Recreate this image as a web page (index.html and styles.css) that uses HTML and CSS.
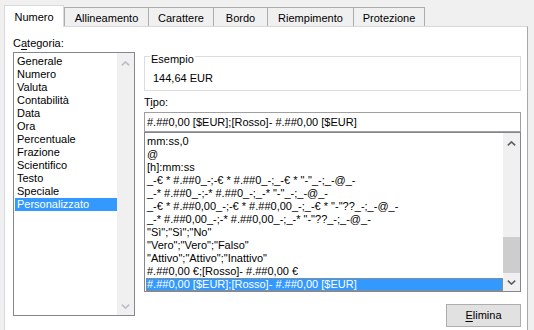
FILE: index.html
```html
<!DOCTYPE html>
<html lang="it">
<head>
	<meta charset="utf-8" />
	<title>Formato celle</title>
	<link rel="stylesheet" href="styles.css">
</head>
<body>
	<div class="dialog">
		<div class="tabs">
			<div class="tab active">Numero</div>
			<div class="tab t-all">Allineamento</div>
			<div class="tab t-car">Carattere</div>
			<div class="tab t-bor">Bordo</div>
			<div class="tab t-rie">Riempimento</div>
			<div class="tab t-pro">Protezione</div>
		</div>
		<div class="panel">
			<div class="col-left">
				<div class="label">C<u>a</u>tegoria:</div>
				<div class="listbox cat">
					<ul class="items">
						<li>Generale</li>
						<li>Numero</li>
						<li>Valuta</li>
						<li>Contabilità</li>
						<li>Data</li>
						<li>Ora</li>
						<li>Percentuale</li>
						<li>Frazione</li>
						<li>Scientifico</li>
						<li>Testo</li>
						<li>Speciale</li>
						<li class="sel">Personalizzato</li>
					</ul>
					<div class="scrollbar off">
						<div class="sb-btn up"><svg width="9" height="5" viewBox="0 0 9 5"><polyline points="0.8,4.4 4.5,0.9 8.2,4.4" /></svg></div>
						<div class="sb-track"></div>
						<div class="sb-btn down"><svg width="9" height="5" viewBox="0 0 9 5"><polyline points="0.8,0.6 4.5,4.1 8.2,0.6" /></svg></div>
					</div>
				</div>
			</div>
			<div class="col-right">
				<div class="sample">
					<span class="legend">Esempio</span>
					<div class="sample-value">144,64 EUR</div>
				</div>
				<div class="label tipo">T<u>i</u>po:</div>
				<div class="input">#.##0,00 [$EUR];[Rosso]- #.##0,00 [$EUR]</div>
				<div class="listbox fmt">
					<ul class="items">
						<li>mm:ss,0</li>
						<li>@</li>
						<li>[h]:mm:ss</li>
						<li>_-€ * #.##0_-;-€ * #.##0_-;_-€ * "-"_-;_-@_-</li>
						<li>_-* #.##0_-;-* #.##0_-;_-* "-"_-;_-@_-</li>
						<li>_-€ * #.##0,00_-;-€ * #.##0,00_-;_-€ * "-"??_-;_-@_-</li>
						<li>_-* #.##0,00_-;-* #.##0,00_-;_-* "-"??_-;_-@_-</li>
						<li>"Sì";"Sì";"No"</li>
						<li>"Vero";"Vero";"Falso"</li>
						<li>"Attivo";"Attivo";"Inattivo"</li>
						<li>#.##0,00 €;[Rosso]- #.##0,00 €</li>
						<li class="sel focus">#.##0,00 [$EUR];[Rosso]- #.##0,00 [$EUR]</li>
					</ul>
					<div class="scrollbar">
						<div class="sb-btn up"><svg width="9" height="5" viewBox="0 0 9 5"><polyline points="0.8,4.4 4.5,0.9 8.2,4.4" /></svg></div>
						<div class="sb-track"><div class="sb-thumb"></div></div>
						<div class="sb-btn down"><svg width="9" height="5" viewBox="0 0 9 5"><polyline points="0.8,0.6 4.5,4.1 8.2,0.6" /></svg></div>
					</div>
				</div>
				<div class="actions">
					<button class="btn"><u>E</u>limina</button>
				</div>
			</div>
		</div>
	</div>
</body>
</html>
```

FILE: styles.css
```css
html { font-family: "Liberation Sans", Arial, sans-serif; font-size: 11px; line-height: 13px; color: #000; }
body { margin: 0; background: #f0f0f0; overflow: hidden; }
u { text-decoration-thickness: 1px; text-underline-offset: 2px; }

.dialog { padding: 5px 0 0 4px; }

/* tabs */
.tabs { display: flex; align-items: flex-end; height: 21px; }
.tab {
	box-sizing: border-box;
	height: 19px;
	border: 1px solid #acacac;
	border-bottom: 0;
	margin-left: -1px;
	text-align: center;
	line-height: 20px;
	background: #f0f0f0;
}
.tab.active {
	width: 60px;
	height: 22px;
	margin: 0 0 -1px 0;
	background: #fff;
	border-color: #d9d9d9;
	line-height: 22px;
	position: relative;
	z-index: 1;
}
.t-all { width: 85px; margin-left: 0; }
.t-car { width: 66px; }
.t-bor { width: 55px; }
.t-rie { width: 87px; }
.t-pro { width: 72px; }

.panel {
	box-sizing: border-box;
	width: 524px;
	height: 320px;
	background: #fff;
	border: 1px solid #d9d9d9;
	border-right-color: #a9a9a9;
	padding: 10px 6px 0 8px;
	display: grid;
	grid-template-columns: 122px 377px;
	column-gap: 9px;
}

.label { height: 13px; }

/* list boxes */
.listbox {
	box-sizing: border-box;
	display: flex;
	border: 1px solid #828790;
	background: #fff;
	overflow: hidden;
}
.listbox.cat { height: 264px; margin-top: 2px; }
.listbox.fmt { height: 160px; }
.items {
	list-style: none;
	margin: 0;
	padding: 2px 0 0 1px;
	flex: 1;
	white-space: nowrap;
	overflow: hidden;
}
.items li { height: 13px; padding-left: 2px; }
.fmt .items li { padding-left: 1px; }
.items li.sel { background: #3399ff; color: #fff; }
.items li.focus { box-sizing: border-box; border: 1px dotted #c8843c; padding-left: 0; line-height: 11px; }

.scrollbar {
	width: 17px;
	display: flex;
	flex-direction: column;
	background: #f0f0f0;
}
.sb-btn { display: flex; align-items: center; justify-content: center; }
.sb-btn.up { height: 20px; }
.sb-btn.down { height: 18px; }
.sb-btn polyline { fill: none; stroke: #606060; stroke-width: 1.6; }
.scrollbar.off polyline { stroke: #bfbfbf; }
.sb-track { flex: 1; display: flex; flex-direction: column; justify-content: flex-end; }
.sb-thumb { height: 36px; background: #cdcdcd; }

/* right side */
.sample {
	position: relative;
	box-sizing: border-box;
	height: 35px;
	margin-top: 19px;
	border: 1px solid #dcdcdc;
	padding: 15px 0 0 8px;
}
.legend {
	position: absolute;
	left: 5px;
	top: -4px;
	padding: 0 1px;
	background: #fff;
}
.label.tipo { margin-top: 5px; }
.input {
	box-sizing: border-box;
	height: 20px;
	margin-top: 3px;
	border: 1px solid #a0a0a0;
	padding: 3px 0 0 2px;
	white-space: nowrap;
}
.actions { display: flex; justify-content: flex-end; margin-top: 12px; }
.btn {
	box-sizing: border-box;
	width: 75px;
	height: 23px;
	font: inherit;
	color: #000;
	background: #e1e1e1;
	border: 1px solid #adadad;
	padding: 0;
}
```
